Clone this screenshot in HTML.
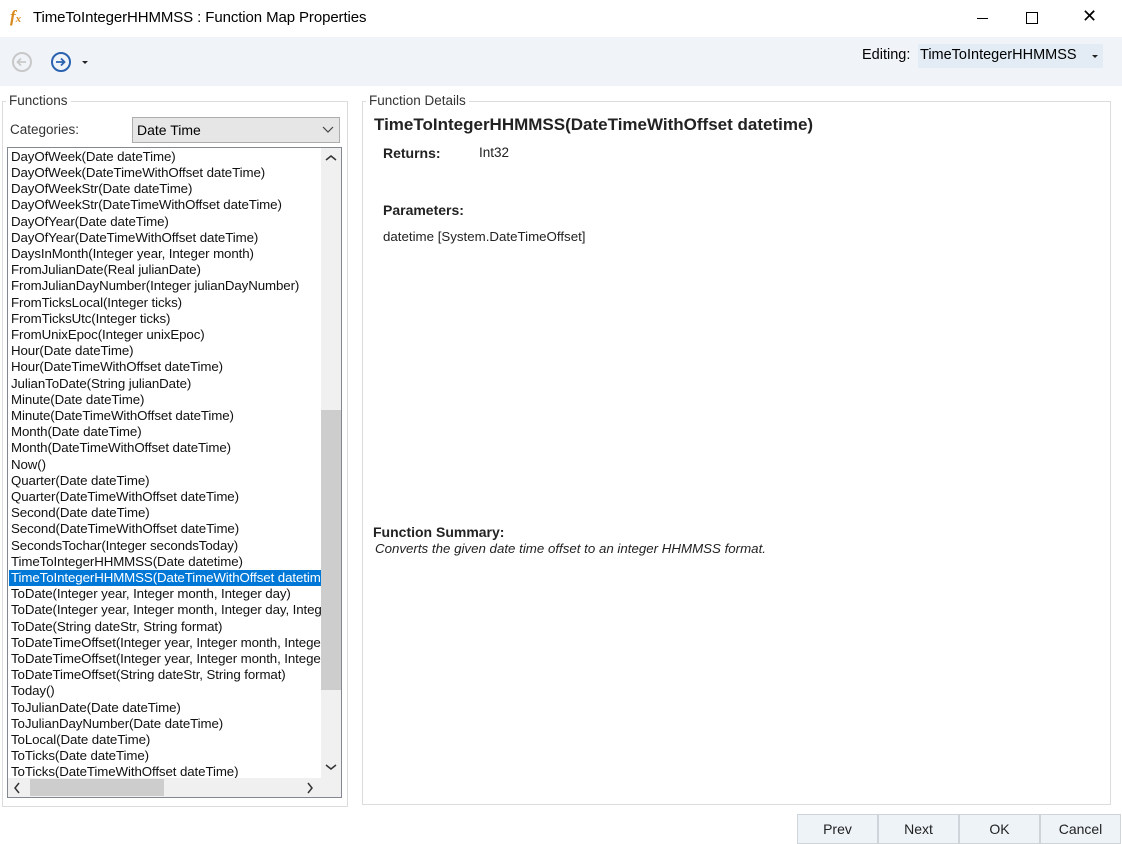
<!DOCTYPE html>
<html><head><style>
body{margin:0;width:1122px;height:843px;background:#fff;font-family:"Liberation Sans",sans-serif;position:relative;overflow:hidden;color:#000}
.a{position:absolute}
.tb{left:0;top:37px;width:1122px;height:49px;background:#f0f4f9}
.list{left:7px;top:147px;width:333px;height:649px;border:1px solid #828790;background:#fff;overflow:hidden}
.clip{position:absolute;left:0;top:0;width:313px;height:630px;overflow:hidden}
.it{position:absolute;left:3px;font-size:13.3px;letter-spacing:-0.1px;white-space:nowrap;line-height:16px;color:#111}
.sel{background:#0078d7;color:#fff;left:1px;width:312px;padding-left:2px}
.btn{top:814px;width:79px;height:28px;background:#eef3f8;border:1px solid #cfd4da;font-size:14px;text-align:center;line-height:28px;color:#222}
</style></head><body>
<div class="a" style="left:10px;top:7px;font-family:'Liberation Serif',serif;font-style:italic;color:#d98a1c;font-size:17px;font-weight:bold">f<span style="font-size:11px">x</span></div>
<div class="a" style="left:33px;top:9px;font-size:15px;letter-spacing:-0.1px">TimeToIntegerHHMMSS : Function Map Properties</div>
<div class="a" style="left:977px;top:18px;width:11px;height:1px;background:#000"></div>
<div class="a" style="left:1026px;top:12px;width:10px;height:10px;border:1px solid #000"></div>
<div class="a" style="left:1082px;top:6px;font-size:18px">✕</div>
<div class="a tb"></div>
<svg class="a" style="left:11px;top:51px" width="90" height="22"><circle cx="11" cy="11" r="9" fill="none" stroke="#c8c8c8" stroke-width="2"/><path d="M15 11H7M10 7.5L6.5 11L10 14.5" fill="none" stroke="#c8c8c8" stroke-width="1.8"/><circle cx="50" cy="11" r="9" fill="none" stroke="#2b62b0" stroke-width="2"/><path d="M45 11H53M50 7.5L53.5 11L50 14.5" fill="none" stroke="#2b62b0" stroke-width="1.8"/><path d="M71 10h6l-3 3z" fill="#222"/></svg>
<div class="a" style="left:862px;top:47px;font-size:14.5px">Editing:</div>
<div class="a" style="left:918px;top:44px;width:185px;height:24px;background:#e3ecf5"></div>
<div class="a" style="left:920px;top:47px;font-size:14.5px">TimeToIntegerHHMMSS</div>
<div class="a" style="left:1092px;top:55px;border-left:3px solid transparent;border-right:3px solid transparent;border-top:3px solid #222"></div>
<div class="a" style="left:2px;top:101px;width:344px;height:704px;border:1px solid #dcdcdc"></div>
<div class="a" style="left:6px;top:93px;background:#fff;padding:0 3px;font-size:13.5px;color:#333">Functions</div>
<div class="a" style="left:10px;top:122px;font-size:13.5px;color:#333">Categories:</div>
<div class="a" style="left:132px;top:117px;width:206px;height:24px;background:#e6e6e6;border:1px solid #adadad"></div>
<div class="a" style="left:137px;top:122px;font-size:14px">Date Time</div>
<svg class="a" style="left:322px;top:126px" width="12" height="8"><path d="M1 1l5 5 5-5" fill="none" stroke="#444" stroke-width="1.2"/></svg>
<div class="a list">
<div class="clip">
<div class="it" style="top:1px">DayOfWeek(Date dateTime)</div>
<div class="it" style="top:17px">DayOfWeek(DateTimeWithOffset dateTime)</div>
<div class="it" style="top:33px">DayOfWeekStr(Date dateTime)</div>
<div class="it" style="top:49px">DayOfWeekStr(DateTimeWithOffset dateTime)</div>
<div class="it" style="top:66px">DayOfYear(Date dateTime)</div>
<div class="it" style="top:82px">DayOfYear(DateTimeWithOffset dateTime)</div>
<div class="it" style="top:98px">DaysInMonth(Integer year, Integer month)</div>
<div class="it" style="top:114px">FromJulianDate(Real julianDate)</div>
<div class="it" style="top:130px">FromJulianDayNumber(Integer julianDayNumber)</div>
<div class="it" style="top:147px">FromTicksLocal(Integer ticks)</div>
<div class="it" style="top:163px">FromTicksUtc(Integer ticks)</div>
<div class="it" style="top:179px">FromUnixEpoc(Integer unixEpoc)</div>
<div class="it" style="top:195px">Hour(Date dateTime)</div>
<div class="it" style="top:211px">Hour(DateTimeWithOffset dateTime)</div>
<div class="it" style="top:228px">JulianToDate(String julianDate)</div>
<div class="it" style="top:244px">Minute(Date dateTime)</div>
<div class="it" style="top:260px">Minute(DateTimeWithOffset dateTime)</div>
<div class="it" style="top:276px">Month(Date dateTime)</div>
<div class="it" style="top:292px">Month(DateTimeWithOffset dateTime)</div>
<div class="it" style="top:309px">Now()</div>
<div class="it" style="top:325px">Quarter(Date dateTime)</div>
<div class="it" style="top:341px">Quarter(DateTimeWithOffset dateTime)</div>
<div class="it" style="top:357px">Second(Date dateTime)</div>
<div class="it" style="top:373px">Second(DateTimeWithOffset dateTime)</div>
<div class="it" style="top:390px">SecondsTochar(Integer secondsToday)</div>
<div class="it" style="top:406px">TimeToIntegerHHMMSS(Date datetime)</div>
<div class="it sel" style="top:422px">TimeToIntegerHHMMSS(DateTimeWithOffset datetime)</div>
<div class="it" style="top:438px">ToDate(Integer year, Integer month, Integer day)</div>
<div class="it" style="top:454px">ToDate(Integer year, Integer month, Integer day, Integer hour)</div>
<div class="it" style="top:471px">ToDate(String dateStr, String format)</div>
<div class="it" style="top:487px">ToDateTimeOffset(Integer year, Integer month, Integer day)</div>
<div class="it" style="top:503px">ToDateTimeOffset(Integer year, Integer month, Integer day)</div>
<div class="it" style="top:519px">ToDateTimeOffset(String dateStr, String format)</div>
<div class="it" style="top:535px">Today()</div>
<div class="it" style="top:552px">ToJulianDate(Date dateTime)</div>
<div class="it" style="top:568px">ToJulianDayNumber(Date dateTime)</div>
<div class="it" style="top:584px">ToLocal(Date dateTime)</div>
<div class="it" style="top:600px">ToTicks(Date dateTime)</div>
<div class="it" style="top:616px">ToTicks(DateTimeWithOffset dateTime)</div>
</div>
<div class="a" style="left:313px;top:0;width:20px;height:630px;background:#f0f0f0"></div>
<div class="a" style="left:313px;top:262px;width:20px;height:280px;background:#cdcdcd"></div>
<div class="a" style="left:0;top:630px;width:333px;height:19px;background:#f0f0f0"></div>
<div class="a" style="left:22px;top:631px;width:134px;height:17px;background:#cdcdcd"></div>
<svg class="a" style="left:317px;top:6px" width="12" height="8"><path d="M1 6l5-4 5 4" fill="none" stroke="#333" stroke-width="1.5"/></svg>
<svg class="a" style="left:317px;top:615px" width="12" height="8"><path d="M1 2l5 4 5-4" fill="none" stroke="#333" stroke-width="1.5"/></svg>
<svg class="a" style="left:5px;top:634px" width="8" height="12"><path d="M6 1l-4 5 4 5" fill="none" stroke="#333" stroke-width="1.5"/></svg>
<svg class="a" style="left:298px;top:634px" width="8" height="12"><path d="M2 1l4 5-4 5" fill="none" stroke="#333" stroke-width="1.5"/></svg>
</div>
<div class="a" style="left:362px;top:101px;width:747px;height:702px;border:1px solid #dcdcdc"></div>
<div class="a" style="left:366px;top:93px;background:#fff;padding:0 3px;font-size:13.5px;color:#333">Function Details</div>
<div class="a" style="left:374px;top:115px;font-size:17px;font-weight:bold;color:#222;letter-spacing:0">TimeToIntegerHHMMSS(DateTimeWithOffset datetime)</div>
<div class="a" style="left:383px;top:145px;font-size:14px;font-weight:bold;color:#222">Returns:</div>
<div class="a" style="left:479px;top:145px;font-size:13.5px;color:#222">Int32</div>
<div class="a" style="left:383px;top:202px;font-size:14px;font-weight:bold;color:#222">Parameters:</div>
<div class="a" style="left:383px;top:229px;font-size:13.3px;color:#222">datetime [System.DateTimeOffset]</div>
<div class="a" style="left:373px;top:524px;font-size:14px;font-weight:bold;color:#222">Function Summary:</div>
<div class="a" style="left:375px;top:541px;font-size:13.3px;font-style:italic;color:#222">Converts the given date time offset to an integer HHMMSS format.</div>
<div class="a btn" style="left:797px">Prev</div>
<div class="a btn" style="left:878px">Next</div>
<div class="a btn" style="left:959px">OK</div>
<div class="a btn" style="left:1040px">Cancel</div>
</body></html>
